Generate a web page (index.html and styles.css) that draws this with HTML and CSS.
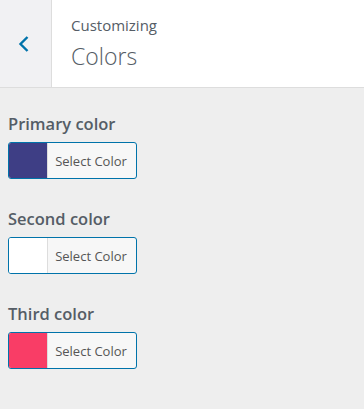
FILE: index.html
```html
<!DOCTYPE html>
<html lang="en">
<head>
    <meta charset="UTF-8">
    <meta name="viewport" content="width=device-width, initial-scale=1.0">
    <title>Customizing Colors</title>
    <link rel="stylesheet" href="styles.css">
</head>
<body>
    <header class="panel-header">
        <button class="back-button" aria-label="Back">
            <svg width="12" height="18" viewBox="0 0 12 18">
                <path d="M9.5 2 L2.5 9 L9.5 16" fill="none" stroke="#0073aa" stroke-width="2.4"/>
            </svg>
        </button>
        <div class="panel-title">
            <span class="panel-sub">Customizing</span>
            <h2>Colors</h2>
        </div>
    </header>

    <div class="controls">
        <div class="control">
            <span class="control-title">Primary color</span>
            <button class="color-button">
                <span class="swatch" style="background-color: #3e3e85;"></span>
                <span class="color-label">Select Color</span>
            </button>
        </div>
        <div class="control">
            <span class="control-title">Second color</span>
            <button class="color-button">
                <span class="swatch" style="background-color: #ffffff;"></span>
                <span class="color-label">Select Color</span>
            </button>
        </div>
        <div class="control">
            <span class="control-title">Third color</span>
            <button class="color-button">
                <span class="swatch" style="background-color: #f93d66;"></span>
                <span class="color-label">Select Color</span>
            </button>
        </div>
    </div>
</body>
</html>
```

FILE: styles.css
```css
body {
    margin: 0;
    padding: 0;
    background-color: #eeeeee;
    font-family: "Open Sans", "Noto Sans", sans-serif;
    color: #555d66;
}
.panel-header {
    display: flex;
    height: 87px;
    background-color: white;
    border-bottom: 1px solid #dddddd;
}
.back-button {
    width: 52px;
    padding: 0;
    margin: 0;
    border: none;
    border-right: 1px solid #dddddd;
    background-color: #f1f1f3;
    display: flex;
    align-items: center;
    justify-content: center;
    padding-right: 4px;
}
.panel-title {
    padding: 14px 0 0 19px;
}
.panel-sub {
    display: block;
    font-size: 15px;
    color: #555d66;
    line-height: 22px;
}
.panel-title h2 {
    margin: 5px 0 0;
    font-size: 23px;
    font-weight: 300;
    color: #555d66;
    line-height: 30px;
}
.controls {
    padding: 24px 8px 0;
}
.control {
    margin-bottom: 28px;
}
.control-title {
    display: block;
    font-size: 16.5px;
    font-weight: 600;
    line-height: 24px;
    margin-bottom: 6px;
}
.color-button {
    display: flex;
    align-items: stretch;
    width: 129px;
    height: 37px;
    padding: 0;
    border: 1px solid #0073aa;
    border-radius: 3px;
    overflow: hidden;
    background-color: #f7f7f7;
    font-family: inherit;
}
.swatch {
    width: 38px;
    border-right: 1px solid #dddddd;
}
.color-label {
    flex: 1;
    align-self: center;
    font-size: 13px;
    color: #555555;
    text-align: center;
    padding-right: 2px;
}
```
